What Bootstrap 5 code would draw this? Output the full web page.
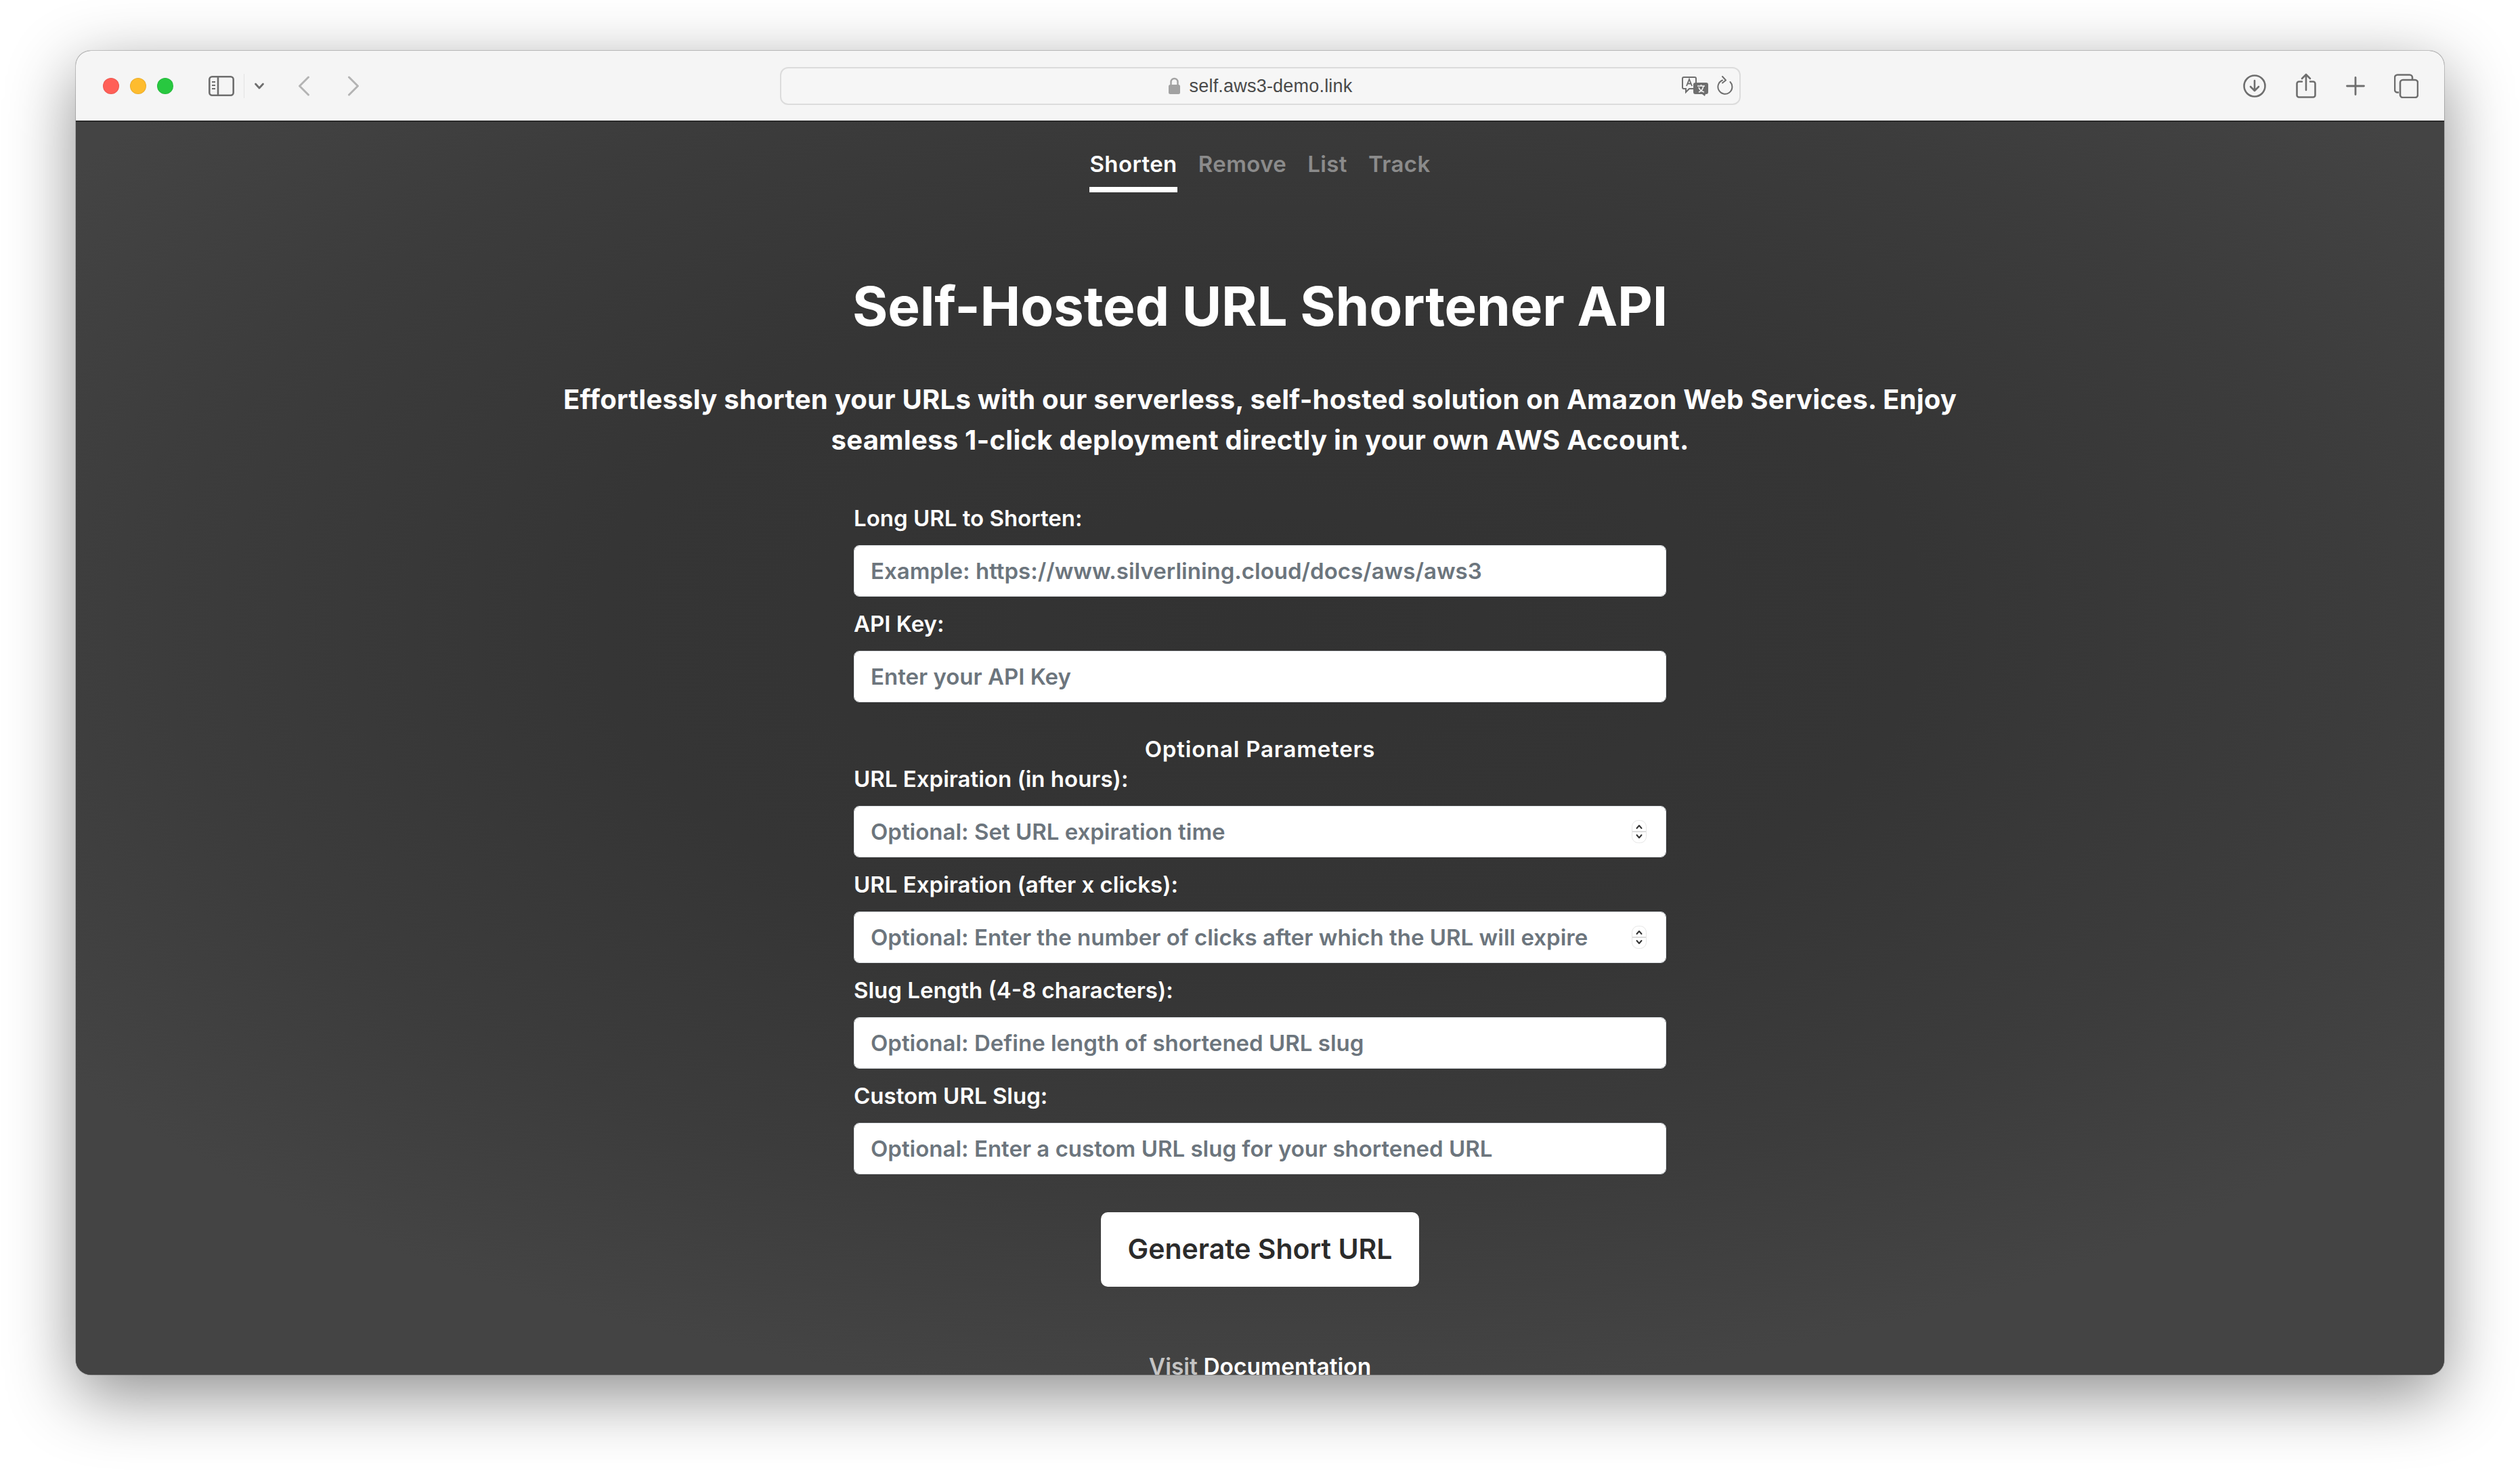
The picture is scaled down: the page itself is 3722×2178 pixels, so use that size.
<!DOCTYPE html>
<html lang="en">
<head>
<meta charset="utf-8">
<title>Self-Hosted URL Shortener API</title>
<link href="https://cdn.jsdelivr.net/npm/bootstrap@5.3.0/dist/css/bootstrap.min.css" rel="stylesheet">
<style>
html,body{background:#fff;margin:0;height:2178px;overflow:hidden}
body{padding:75px 112px 0;font-family:Inter,"Liberation Sans",sans-serif}
.win{height:1955px;border-radius:22px;overflow:hidden;box-shadow:0 30px 100px rgba(0,0,0,.45),0 0 0 1px rgba(0,0,0,.18);background:#3a3a3a}
.bar{height:105px;background:#f5f5f5;border-bottom:2px solid #2a2a2a}
.bar-side{flex:1 1 0;min-width:0}
.dot{width:24px;height:24px;border-radius:50%;border:1px solid rgba(0,0,0,.08)}
.dot-r{background:#ff5f57;margin-left:40px}
.dot-y{background:#febc2e;margin-left:16px}
.dot-g{background:#28c840;margin-left:16px}
.ic-side{margin-left:52px}
.sep{width:1px;height:36px;background:#e3e3e3;margin:0 14px 0 14px}
.ic-back{margin-left:49px}
.ic-fwd{margin-left:55px}
.urlbar{width:1419px;height:56px;border:2px solid #dcdcdc;border-radius:12px;display:grid;grid-template-columns:1fr auto 1fr;align-items:center;background:#f6f6f6}
.urltext{font:400 27px "Liberation Sans",sans-serif;color:#4a4a4a;letter-spacing:.2px;padding-top:2px}
.urlicons{justify-self:end;margin-right:9px;gap:12px}
.page{height:1848px;overflow:hidden;color:#fff;background:radial-gradient(ellipse 62% 62% at 50% 40%,#323232 0%,#353535 45%,#3c3c3c 75%,#444 100%)}
.tabs{gap:31px;padding-top:40px}
.tabs .nav-link{padding:0 0 12px;font-weight:600;font-size:33px;letter-spacing:.4px;line-height:44px;color:#8b8b8b;border-bottom:8px solid transparent}
.tabs .nav-link.active{color:#fff;border-bottom-color:#fff}
.ttl{font-weight:700;font-size:80px;letter-spacing:-.15px;line-height:110px;margin:113px 0 0;text-align:center}
.sub{font-weight:700;font-size:40px;letter-spacing:.25px;line-height:60px;margin:53px 0 0;text-align:center}
.frm{width:1200px;margin:61px auto 0}
.lbl{display:block;margin:0 0 16px;font-weight:600;font-size:33px;line-height:48px;color:#fff}
.fld{height:76px;margin-bottom:16px;padding:0 24px;border-radius:8px;border:1px solid #dee2e6;font-weight:500;font-size:33px;color:#212529;font-family:inherit}
.fld::placeholder{color:#6c757d;opacity:1;font-weight:600}
.fld[type=number]{-moz-appearance:textfield}
.fld[type=number]::-webkit-inner-spin-button{-webkit-appearance:none}
.spin{position:absolute;right:29px;top:21px}
.opt{font-weight:600;font-size:33px;letter-spacing:.8px;line-height:40px;text-align:center;margin:49px 0 0}
.gen{display:block;width:470px;height:110px;margin:56px auto 0;background:#fff;color:#2b2b2b;font-weight:600;font-size:41px;border:0;border-radius:10px}
.visit{font-weight:600;font-size:33.5px;line-height:48px;text-align:center;margin-top:94px;color:#c4c4c4}
.visit a{color:#fff;text-decoration:none}
</style>
</head>
<body>
<div class="win d-flex flex-column">
  <div class="bar d-flex align-items-center flex-shrink-0">
    <div class="bar-side d-flex align-items-center">
      <span class="dot dot-r"></span><span class="dot dot-y"></span><span class="dot dot-g"></span>
      <svg class="ic-side" width="38" height="30" viewBox="0 0 38 30" fill="none" stroke="#6e6e6e" stroke-width="2.6"><rect x="1.3" y="1.3" width="35.4" height="27.4" rx="4"/><path d="M14 1.5v27"/><path d="M5 9h5M5 14h5M5 19h5" stroke-width="2"/></svg>
      <span class="sep"></span>
      <svg width="16" height="12" viewBox="0 0 16 12" fill="none" stroke="#6e6e6e" stroke-width="2.8" stroke-linecap="round" stroke-linejoin="round"><path d="M2.5 3l5.5 6 5.5-6"/></svg>
      <svg class="ic-back" width="18" height="30" viewBox="0 0 18 30" fill="none" stroke="#b4b4b4" stroke-width="3" stroke-linecap="round" stroke-linejoin="round"><path d="M15.5 2L2.5 15l13 13"/></svg>
      <svg class="ic-fwd" width="18" height="30" viewBox="0 0 18 30" fill="none" stroke="#b4b4b4" stroke-width="3" stroke-linecap="round" stroke-linejoin="round"><path d="M2.5 2l13 13-13 13"/></svg>
    </div>
    <div class="urlbar flex-shrink-0">
      <span></span>
      <div class="d-flex align-items-center" style="gap:13px">
        <svg width="19" height="26" viewBox="0 0 19 26" fill="none"><path d="M4.5 11V7a5 5 0 0110 0v4" stroke="#a2a2a2" stroke-width="2.4"/><rect x="1" y="11" width="17" height="14" rx="2.5" fill="#a2a2a2"/></svg>
        <span class="urltext">self.aws3-demo.link</span>
      </div>
      <div class="urlicons d-flex align-items-center">
        <svg width="40" height="30" viewBox="0 0 40 30" fill="none"><path d="M3 2h16a2 2 0 012 2v13a2 2 0 01-2 2H11l-5 5v-5H3a2 2 0 01-2-2V4a2 2 0 012-2z" stroke="#6e6e6e" stroke-width="2" fill="#f6f6f6"/><path d="M7 15l4-10 4 10M8.5 11.5h5" stroke="#6e6e6e" stroke-width="1.8"/><path d="M20 10h16a3 3 0 013 3v11a3 3 0 01-3 3h-1l-1 3-4-3H20a3 3 0 01-3-3V13a3 3 0 013-3z" fill="#6e6e6e"/><path d="M23 15h11M28.5 13v2M25 24c4-1 6-4 7-9M25 17c1 3 4 6 8 7" stroke="#f6f6f6" stroke-width="1.6" fill="none"/></svg>
        <svg width="24" height="30" viewBox="0 0 24 30" fill="none" stroke="#6e6e6e" stroke-width="2" stroke-linecap="round" stroke-linejoin="round"><path d="M8 6.5A10.5 10.5 0 1 0 19.5 9"/><path d="M8 1l5 5.5-5 4"/></svg>
      </div>
    </div>
    <div class="bar-side d-flex align-items-center justify-content-end">
      <svg width="34" height="34" viewBox="0 0 34 34" fill="none" stroke="#6e6e6e" stroke-width="2.6" stroke-linecap="round" stroke-linejoin="round"><circle cx="17" cy="17" r="15.5"/><path d="M17 9v15M11 18l6 6 6-6"/></svg>
      <svg style="margin-left:44px" width="30" height="38" viewBox="0 0 30 38" fill="none" stroke="#6e6e6e" stroke-width="2.6" stroke-linecap="round" stroke-linejoin="round"><path d="M9 12.5H4.500a3 3 0 00-3 3v17a3 3 0 003 3h21a3 3 0 003-3v-17a3 3 0 00-3-3H21"/><path d="M15 25V2M9 8l6-6 6 6"/></svg>
      <svg style="margin-left:44px" width="28" height="28" viewBox="0 0 28 28" fill="none" stroke="#6e6e6e" stroke-width="2.8" stroke-linecap="round"><path d="M14 1.5v25M1.500 14h25"/></svg>
      <svg style="margin-left:43px;margin-right:38px" width="36" height="36" viewBox="0 0 36 36" fill="none" stroke="#6e6e6e" stroke-width="2.6" stroke-linejoin="round"><path d="M7 27.5H5a4 4 0 01-4-4V5.500a4 4 0 014-4h18a4 4 0 014 4V8"/><rect x="9" y="9" width="26" height="26" rx="4"/></svg>
    </div>
  </div>
  <main class="page flex-grow-1">
    <nav class="nav justify-content-center tabs">
      <a class="nav-link active" href="#">Shorten</a>
      <a class="nav-link" href="#">Remove</a>
      <a class="nav-link" href="#">List</a>
      <a class="nav-link" href="#">Track</a>
    </nav>
    <h1 class="ttl">Self-Hosted URL Shortener API</h1>
    <p class="sub">Effortlessly shorten your URLs with our serverless, self-hosted solution on Amazon Web Services. Enjoy<br>seamless 1-click deployment directly in your own AWS Account.</p>
    <form class="frm">
      <label class="lbl" for="a1">Long URL to Shorten:</label>
      <input class="form-control fld" id="a1" type="text" placeholder="Example: https://www.silverlining.cloud/docs/aws/aws3">
      <label class="lbl" for="a2">API Key:</label>
      <input class="form-control fld" id="a2" type="text" placeholder="Enter your API Key">
      <div class="opt">Optional Parameters</div>
      <label class="lbl" for="a3">URL Expiration (in hours):</label>
      <div class="position-relative">
        <input class="form-control fld" id="a3" type="number" placeholder="Optional: Set URL expiration time">
        <svg class="spin" width="22" height="34" viewBox="0 0 22 34" fill="none"><rect x=".5" y=".5" width="21" height="33" rx="9" fill="#fff" stroke="#e6e6e6"/><path d="M1 17h20" stroke="#ddd" stroke-width="2"/><path d="M7.5 12l3.5-4 3.5 4M7.5 22l3.5 4 3.5-4" stroke="#333" stroke-width="2" stroke-linecap="round" stroke-linejoin="round"/></svg>
      </div>
      <label class="lbl" for="a4">URL Expiration (after x clicks):</label>
      <div class="position-relative">
        <input class="form-control fld" id="a4" type="number" placeholder="Optional: Enter the number of clicks after which the URL will expire">
        <svg class="spin" width="22" height="34" viewBox="0 0 22 34" fill="none"><rect x=".5" y=".5" width="21" height="33" rx="9" fill="#fff" stroke="#e6e6e6"/><path d="M1 17h20" stroke="#ddd" stroke-width="2"/><path d="M7.5 12l3.5-4 3.5 4M7.5 22l3.5 4 3.5-4" stroke="#333" stroke-width="2" stroke-linecap="round" stroke-linejoin="round"/></svg>
      </div>
      <label class="lbl" for="a5">Slug Length (4-8 characters):</label>
      <input class="form-control fld" id="a5" type="text" placeholder="Optional: Define length of shortened URL slug">
      <label class="lbl" for="a6">Custom URL Slug:</label>
      <input class="form-control fld" id="a6" type="text" placeholder="Optional: Enter a custom URL slug for your shortened URL">
      <button class="btn gen" type="button">Generate Short URL</button>
    </form>
    <div class="visit">Visit <a href="#">Documentation</a></div>
  </main>
</div>
<script src="https://cdn.jsdelivr.net/npm/bootstrap@5.3.0/dist/js/bootstrap.bundle.min.js"></script>
</body>
</html>
